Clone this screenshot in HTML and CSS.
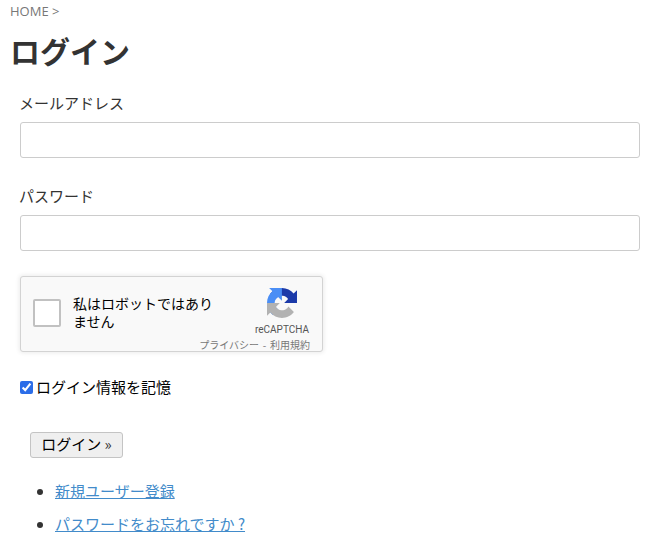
FILE: index.html
```html
<!DOCTYPE html>
<html lang="ja">
<head>
<meta charset="utf-8">
<title>ログイン</title>
<link rel="stylesheet" href="styles.css">
</head>
<body>
<div class="crumb">HOME &gt;</div>
<h1>ログイン</h1>
<form class="form">
  <div class="field">
    <label class="lbl" for="m">メールアドレス</label>
    <input class="inp" id="m" type="text">
  </div>
  <div class="field">
    <label class="lbl" for="p">パスワード</label>
    <input class="inp" id="p" type="password">
  </div>
  <div class="captcha">
    <span class="cbox"></span>
    <span class="ctext">私はロボットではあり<br>ません</span>
    <div class="cbrand">
      <svg class="logo" viewBox="0 0 64 64" width="30" height="30">
        <path fill="#1c3aa9" d="M64 31.955l-.033-1.37V4.687l-7.16 7.16C50.948 4.674 42.033.093 32.05.093c-10.4 0-19.622 4.96-25.458 12.64l11.736 11.86a15.55 15.55 0 0 1 4.754-5.334c2.05-1.6 4.952-2.906 8.968-2.906.485 0 .86.057 1.135.163 4.976.393 9.288 3.14 11.828 7.124l-8.307 8.307c10.522-.04 22.4-.066 27.295 0"/>
        <path fill="#4a8ef5" d="M31.862.001l-1.37.033H4.594l7.16 7.16C4.58 13.053 0 21.968 0 31.95c0 10.4 4.96 19.622 12.64 25.458l11.86-11.736a15.55 15.55 0 0 1-5.334-4.754c-1.6-2.05-2.906-4.952-2.906-8.968 0-.485.057-.86.163-1.135.393-4.976 3.14-9.288 7.124-11.828l8.307 8.307c-.04-10.522-.066-22.4 0-27.295"/>
        <path fill="#b2b2b2" d="M.002 32.037l.033 1.37v25.898l7.16-7.16c5.86 7.173 14.775 11.754 24.757 11.754 10.4 0 19.622-4.96 25.458-12.64L45.674 39.4a15.55 15.55 0 0 1-4.754 5.334c-2.05 1.6-4.952 2.906-8.968 2.906-.485 0-.86-.057-1.135-.163-4.976-.393-9.288-3.14-11.828-7.124l8.307-8.307c-10.522.04-22.4.066-27.295 0"/>
      </svg>
      <div class="rc">reCAPTCHA</div>
      <div class="terms">プライバシー - 利用規約</div>
    </div>
  </div>
  <label class="remember"><input class="chk" type="checkbox" checked>ログイン情報を記憶</label>
  <button class="btn" type="button">ログイン <span class="raq">»</span></button>
</form>
<ul class="links">
  <li><a href="#">新規ユーザー登録</a></li>
  <li><a href="#">パスワードをお忘れですか ?</a></li>
</ul>
</body>
</html>
```
FILE: styles.css
```css
html, body { margin: 0; padding: 0; }
body {
  background: #fff;
  color: #333;
  font-family: "Open Sans", "Noto Sans CJK JP", sans-serif;
  font-size: 15px;
  overflow: hidden;
}
.crumb {
  padding: 3px 0 0 10px;
  font-size: 13px;
  line-height: 17px;
  color: #777;
}
h1 {
  margin: 10px 0 0 10px;
  font-family: "Noto Sans CJK JP", sans-serif;
  font-size: 30px;
  font-weight: 700;
  line-height: 40px;
  color: #333;
}
.form { padding: 0 14px 0 20px; }
.field { margin-bottom: 27px; }
.field:first-child { margin-top: 22px; }
.field + .field { margin-bottom: 25px; }
.lbl {
  display: block;
  font-family: "Noto Sans CJK JP", sans-serif;
  font-size: 15px;
  line-height: 22px;
  margin-bottom: 8px;
  margin-left: -1px;
  color: #333;
}
.inp {
  display: block;
  box-sizing: border-box;
  width: 100%;
  height: 36px;
  border: 1px solid #ccc;
  border-radius: 3px;
  background: #fff;
  outline: none;
}
.captcha {
  box-sizing: border-box;
  width: 303px;
  height: 76px;
  display: flex;
  align-items: flex-start;
  background: #f9f9f9;
  border: 1px solid #d3d3d3;
  border-radius: 3px;
  box-shadow: 0 0 4px 1px rgba(0,0,0,.08);
  font-family: "Noto Sans CJK JP", Roboto, sans-serif;
}
.cbox {
  box-sizing: border-box;
  flex: none;
  width: 28px;
  height: 28px;
  margin: 22px 0 0 12px;
  background: #fff;
  border: 2px solid #c1c1c1;
  border-radius: 2px;
}
.ctext {
  flex: none;
  width: 145px;
  margin: 17px 0 0 12px;
  font-size: 14px;
  line-height: 18px;
  color: #000;
}
.cbrand {
  flex: 1;
  display: flex;
  flex-direction: column;
  align-items: flex-end;
  padding: 11px 12px 0 0;
  min-width: 0;
}
.logo { display: block; margin-right: 13px; }
.rc {
  margin: 5px 1px 0 0;
  font-family: Roboto, sans-serif;
  font-size: 10px;
  line-height: 13px;
  color: #555;
}
.terms {
  margin-top: 2px;
  font-size: 10px;
  line-height: 14px;
  word-spacing: 1.5px;
  color: #777;
  white-space: nowrap;
}
.remember {
  display: flex;
  align-items: center;
  margin-top: 24px;
  font-family: "Noto Sans CJK JP", sans-serif;
  font-size: 15px;
  line-height: 22px;
  color: #000;
}
.chk {
  width: 13px;
  height: 13px;
  margin: 0 3px 0 0;
  accent-color: #2b6de8;
}
.btn {
  display: block;
  box-sizing: border-box;
  width: 93px;
  height: 26px;
  margin: 34px 0 0 10px;
  padding: 0 0 2px;
  background: #efefef;
  border: 1px solid #c4c4c4;
  border-radius: 3px;
  font-family: "Noto Sans CJK JP", sans-serif;
  font-size: 15px;
  line-height: 22px;
  color: #000;
}
.raq { color: #333; }
.links {
  margin: 22px 0 0;
  padding: 0 0 0 55px;
  font-family: "Noto Sans CJK JP", sans-serif;
  font-size: 15px;
  line-height: 22px;
}
.links li { margin-bottom: 11px; }
.links a { color: #428bca; }
```
